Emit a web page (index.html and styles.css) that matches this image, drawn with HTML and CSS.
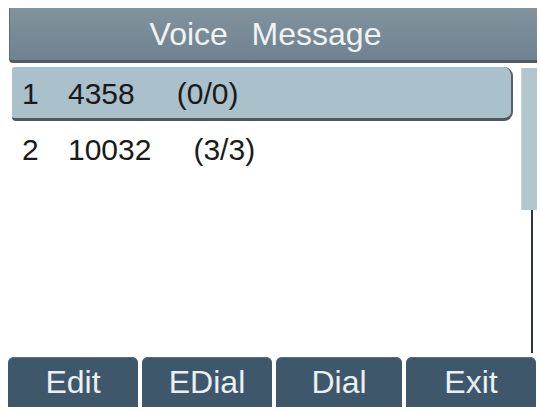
FILE: index.html
```html
<!DOCTYPE html>
<html>
<head>
<meta charset="utf-8">
<link rel="stylesheet" href="styles.css">
</head>
<body>
<div class="screen">
  <div class="title">Voice&nbsp;&nbsp;Message</div>
  <div class="main">
    <div class="list">
      <div class="row selected"><span class="idx">1</span><span class="num">4358</span><span class="cnt">(0/0)</span></div>
      <div class="row"><span class="idx">2</span><span class="num">10032</span><span class="cnt">(3/3)</span></div>
    </div>
    <div class="scroll">
      <div class="thumb"></div>
      <div class="track"></div>
    </div>
  </div>
  <div class="softkeys">
    <div class="key">Edit</div>
    <div class="key">EDial</div>
    <div class="key">Dial</div>
    <div class="key">Exit</div>
  </div>
</div>
</body>
</html>
```

FILE: styles.css
```css
html, body {
  margin: 0;
  padding: 0;
  background: #ffffff;
}
.screen {
  width: 540px;
  height: 412px;
  padding-top: 8px;
  box-sizing: border-box;
  font-family: "Liberation Sans", Arial, sans-serif;
  display: flex;
  flex-direction: column;
}
.title {
  margin-left: 9px;
  width: 528px;
  height: 55px;
  box-sizing: border-box;
  background: linear-gradient(#82939e, #6f828f);
  border-bottom: 3px solid #4e5e69;
  border-left: 1px solid #5d6e79;
  border-bottom-left-radius: 4px;
  color: #eef3f5;
  font-size: 32px;
  line-height: 52px;
  text-align: center;
  padding-right: 16px;
  word-spacing: 3px;
}
.main {
  display: flex;
  height: 286px;
  margin-top: 4px;
}
.list {
  margin-left: 12px;
  width: 501px;
  display: flex;
  flex-direction: column;
}
.row {
  height: 56px;
  box-sizing: border-box;
  display: flex;
  align-items: center;
  font-size: 30px;
  color: #1a1a1a;
  padding-left: 10px;
}
.row.selected {
  height: 54px;
  background: #aac0ca;
  border-bottom: 3px solid #4c5761;
  border-right: 2px solid #55606a;
  border-radius: 3px 9px 9px 4px;
  padding-top: 2px;
}
.row + .row {
  margin-top: 1px;
}
.idx {
  width: 46px;
}
.num {
  margin-right: 42px;
}
.scroll {
  margin-left: 8px;
  width: 16px;
  display: flex;
  flex-direction: column;
  padding-top: 1px;
}
.thumb {
  height: 142px;
  background: #b3c6cd;
  border-left: 1px solid #c6d5da;
  box-sizing: border-box;
}
.track {
  flex: 1;
  margin-left: 10px;
  width: 2px;
  background: #2f3438;
}
.softkeys {
  display: flex;
  gap: 4px;
  margin-left: 8px;
  margin-top: 4px;
  width: 529px;
}
.key {
  width: 130px;
  height: 50px;
  background: #3e576a;
  border-radius: 6px 6px 0 0;
  color: #e9f0f3;
  font-size: 32px;
  line-height: 50px;
  text-align: center;
  box-shadow: inset 0 1px 0 #5a7081;
}
.key:nth-child(3) {
  width: 126px;
}
```
